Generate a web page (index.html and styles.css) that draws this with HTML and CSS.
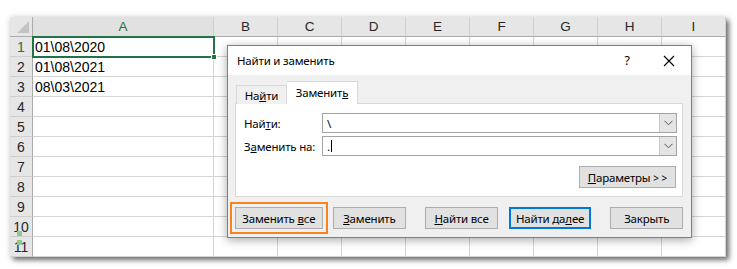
FILE: index.html
```html
<!DOCTYPE html>
<html lang="ru">
<head>
<meta charset="utf-8">
<link rel="stylesheet" href="styles.css">
</head>
<body>
<div class="stage">
  <div class="sheet">
    <div class="corner"><span class="tri"></span></div>
    <div class="ch sel">A</div><div class="ch">B</div><div class="ch">C</div><div class="ch">D</div><div class="ch">E</div><div class="ch">F</div><div class="ch">G</div><div class="ch">H</div><div class="ch">I</div>

    <div class="rh sel">1</div><div class="cell a1">01\08\2020<span class="handle"></span></div><div class="cell"></div><div class="cell"></div><div class="cell"></div><div class="cell"></div><div class="cell"></div><div class="cell"></div><div class="cell"></div><div class="cell"></div>
    <div class="rh">2</div><div class="cell">01\08\2021</div><div class="cell"></div><div class="cell"></div><div class="cell"></div><div class="cell"></div><div class="cell"></div><div class="cell"></div><div class="cell"></div><div class="cell"></div>
    <div class="rh">3</div><div class="cell">08\03\2021</div><div class="cell"></div><div class="cell"></div><div class="cell"></div><div class="cell"></div><div class="cell"></div><div class="cell"></div><div class="cell"></div><div class="cell"></div>
    <div class="rh">4</div><div class="cell"></div><div class="cell"></div><div class="cell"></div><div class="cell"></div><div class="cell"></div><div class="cell"></div><div class="cell"></div><div class="cell"></div><div class="cell"></div>
    <div class="rh">5</div><div class="cell"></div><div class="cell"></div><div class="cell"></div><div class="cell"></div><div class="cell"></div><div class="cell"></div><div class="cell"></div><div class="cell"></div><div class="cell"></div>
    <div class="rh">6</div><div class="cell"></div><div class="cell"></div><div class="cell"></div><div class="cell"></div><div class="cell"></div><div class="cell"></div><div class="cell"></div><div class="cell"></div><div class="cell"></div>
    <div class="rh">7</div><div class="cell"></div><div class="cell"></div><div class="cell"></div><div class="cell"></div><div class="cell"></div><div class="cell"></div><div class="cell"></div><div class="cell"></div><div class="cell"></div>
    <div class="rh">8</div><div class="cell"></div><div class="cell"></div><div class="cell"></div><div class="cell"></div><div class="cell"></div><div class="cell"></div><div class="cell"></div><div class="cell"></div><div class="cell"></div>
    <div class="rh">9</div><div class="cell"></div><div class="cell"></div><div class="cell"></div><div class="cell"></div><div class="cell"></div><div class="cell"></div><div class="cell"></div><div class="cell"></div><div class="cell"></div>
    <div class="rh">10<span class="blip b1"></span></div><div class="cell"></div><div class="cell"></div><div class="cell"></div><div class="cell"></div><div class="cell"></div><div class="cell"></div><div class="cell"></div><div class="cell"></div><div class="cell"></div>
    <div class="rh">11<span class="blip b2"></span></div><div class="cell"></div><div class="cell"></div><div class="cell"></div><div class="cell"></div><div class="cell"></div><div class="cell"></div><div class="cell"></div><div class="cell"></div><div class="cell"></div>
  </div>

  <div class="dialog">
    <div class="titlebar">
      <span class="title">Найти и заменить</span>
      <span class="help">?</span>
      <span class="close"><svg width="12" height="12" viewBox="0 0 12 12"><path d="M1 1 L11 11 M11 1 L1 11" stroke="#000" stroke-width="1.1" fill="none"/></svg></span>
    </div>
    <div class="body">
      <div class="tabs">
        <div class="tab"><span>На<u>й</u>ти</span></div>
        <div class="tab active"><span>Заменит<u>ь</u></span></div>
      </div>
      <div class="panel">
        <div class="frow">
          <span class="lbl">Най<u>т</u>и:</span>
          <div class="combo"><span class="val">\</span><span class="drop"><svg width="9" height="6" viewBox="0 0 9 6"><path d="M0.5 0.8 L4.5 4.8 L8.5 0.8" stroke="#555" stroke-width="1" fill="none"/></svg></span></div>
        </div>
        <div class="frow">
          <span class="lbl">З<u>а</u>менить на:</span>
          <div class="combo"><span class="val">.<span class="caret"></span></span><span class="drop"><svg width="9" height="6" viewBox="0 0 9 6"><path d="M0.5 0.8 L4.5 4.8 L8.5 0.8" stroke="#555" stroke-width="1" fill="none"/></svg></span></div>
        </div>
        <div class="prow">
          <button class="btn params"><span><u>П</u>араметры <span class="gt">&gt; &gt;</span></span></button>
        </div>
      </div>
      <div class="buttons">
        <button class="btn b-all"><span>Заменить <u>в</u>се</span></button>
        <button class="btn b-rep"><span><u>З</u>аменить</span></button>
        <button class="btn b-fall"><span><u>Н</u>айти все</span></button>
        <button class="btn b-next"><span>Найти да<u>л</u>ее</span></button>
        <button class="btn b-close"><span>Закрыть</span></button>
      </div>
    </div>
  </div>
</div>
</body>
</html>
```

FILE: styles.css
```css
* { box-sizing: border-box; }
html, body { margin: 0; padding: 0; background: #fff; }
body { width: 737px; height: 269px; overflow: hidden; }

.stage {
  position: relative;
  padding: 17px 0 0 10px;
}

.sheet {
  display: grid;
  grid-template-columns: 23px 181px repeat(8, 64px);
  grid-template-rows: repeat(12, 20px);
  width: 716px;
  background: #fff;
  box-shadow: 3px 3px 5px rgba(0,0,0,0.55), 0 0 7px rgba(0,0,0,0.12);
  font-family: "Liberation Sans", Arial, sans-serif;
  font-size: 14px;
  color: #000;
}

.corner {
  position: relative;
  background: #e6e6e6;
  border-right: 1px solid #ababab;
  border-bottom: 1px solid #ababab;
}
.tri {
  position: absolute;
  right: 3px;
  bottom: 3px;
  width: 0; height: 0;
  border-left: 12px solid transparent;
  border-bottom: 12px solid #c4c4c4;
}

.ch {
  background: #e6e6e6;
  border-right: 1px solid #cfcfcf;
  border-bottom: 1px solid #ababab;
  display: flex;
  align-items: center;
  justify-content: center;
  color: #262626;
  font-size: 13.5px;
}
.ch.sel { color: #217346; background: #e1e1e1; }

.rh {
  position: relative;
  background: #e6e6e6;
  border-right: 1px solid #ababab;
  border-bottom: 1px solid #cfcfcf;
  display: flex;
  align-items: center;
  justify-content: center;
  color: #262626;
  font-size: 14px;
}
.rh.sel { color: #217346; }

.cell {
  position: relative;
  border-right: 1px solid #d4d4d4;
  border-bottom: 1px solid #d4d4d4;
  padding: 1px 0 0 2px;
  line-height: 18px;
  white-space: nowrap;
}
.cell.a1 {
  outline: 2px solid #217346;
  outline-offset: -1px;
  z-index: 1;
}
.handle {
  position: absolute;
  right: -4px;
  bottom: -4px;
  width: 6px;
  height: 6px;
  background: #217346;
  border: 1px solid #fff;
}

.blip {
  position: absolute;
  width: 5px;
  height: 5px;
  background: #8cc98c;
}
.b1 { left: 7px; top: 14px; }
.b2 { left: 7px; top: 3px; }

/* Dialog */
.dialog {
  position: absolute;
  left: 227px;
  top: 45px;
  width: 465px;
  height: 193px;
  border: 1px solid #7f7f7f;
  background: #f0f0f0;
  box-shadow: 0 2px 9px rgba(0,0,0,0.35);
  font-family: "Noto Sans", "Open Sans", sans-serif;
  font-size: 11.5px;
  letter-spacing: -0.2px;
  color: #000;
  display: flex;
  flex-direction: column;
}

.titlebar {
  height: 30px;
  background: #fff;
  display: flex;
  align-items: center;
  padding-left: 9px;
}
.title { flex: 1; font-size: 11.5px; }
.help { width: 20px; text-align: center; margin-right: 26px; font-size: 12.5px; }
.close { width: 12px; height: 12px; margin-right: 16px; display: flex; }

.body {
  flex: 1;
  padding: 7px 8px 8px 7px;
  display: flex;
  flex-direction: column;
}

.tabs {
  display: flex;
  align-items: flex-end;
  height: 22px;
  padding-left: 1px;
  margin-bottom: -1px;
  position: relative;
  z-index: 1;
}
.tab {
  height: 19px;
  border: 1px solid #d9d9d9;
  border-bottom: none;
  background: #f0f0f0;
  display: flex;
  align-items: center;
  width: 51px;
  justify-content: center;
}
.tab.active {
  height: 23px;
  width: 71px;
  background: #fff;
  border-color: #d9d9d9;
  border-left: none;
  padding-bottom: 1px;
}

.panel {
  height: 94px;
  background: #fff;
  border: 1px solid #d9d9d9;
  padding: 9px 5px 0 8px;
  display: flex;
  flex-direction: column;
  gap: 3px;
}
.frow {
  display: flex;
  align-items: center;
  height: 20px;
}
.lbl {
  width: 78px;
}
.combo {
  flex: 1;
  height: 20px;
  border: 1px solid #a3a3a3;
  display: flex;
  background: #fff;
}
.val {
  flex: 1;
  padding-left: 4px;
  line-height: 17px;
  display: flex;
  align-items: center;
}
.caret {
  display: inline-block;
  width: 1px;
  height: 12px;
  background: #000;
  margin-left: 1px;
}
.drop {
  width: 17px;
  background: #e5e5e5;
  border-left: 1px solid #c8c8c8;
  display: flex;
  align-items: center;
  justify-content: center;
}

.prow {
  display: flex;
  justify-content: flex-end;
  margin-top: 7px;
  padding-right: 1px;
}

.btn {
  height: 22px;
  background: #e1e1e1;
  border: 1px solid #adadad;
  font-family: "Noto Sans", "Open Sans", sans-serif;
  font-size: 11.5px;
  letter-spacing: -0.2px;
  color: #000;
  padding: 0;
  display: flex;
  align-items: center;
  justify-content: center;
  white-space: nowrap;
}
.params { width: 97px; }
.gt { font-size: 10px; letter-spacing: 0; }

.buttons {
  display: flex;
  margin-top: 10px;
}
.b-all {
  width: 88px;
  outline: 2px solid #f5861f;
  outline-offset: 3px;
}
.b-rep { width: 74px; margin-left: 10px; }
.b-fall { width: 73px; margin-left: 19px; }
.b-next { width: 83px; margin-left: 11px; border: 2px solid #0078d7; }
.b-close { width: 73px; margin-left: 19px; }
```
